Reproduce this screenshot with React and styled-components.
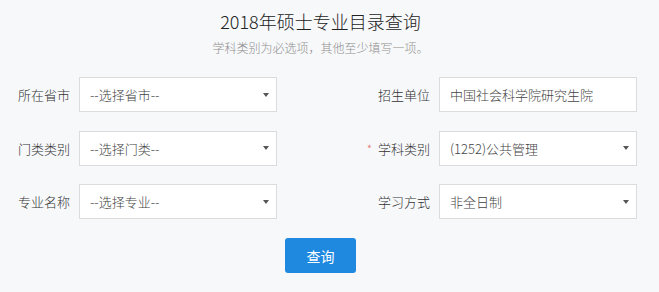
import React from "react";
import styled, { createGlobalStyle } from "styled-components";

const Global = createGlobalStyle`
  html, body { margin: 0; padding: 0; background: #f7f8fa; }
  body { font-family: "Noto Sans CJK SC", "Noto Sans", sans-serif; }
`;

const Page = styled.div`
  width: 659px;
  height: 292px;
  background: #f7f8fa;
  box-sizing: border-box;
  padding-top: 8px;
`;

const Header = styled.div`
  width: 641px;
  text-align: center;
`;

const Title = styled.h1`
  margin: 0;
  font-size: 18px;
  font-weight: 300;
  line-height: 26px;
  color: #222;
`;

const Subtitle = styled.p`
  margin: 5px 0 0;
  font-size: 12px;
  font-weight: 300;
  line-height: 18px;
  color: #8f8f8f;
`;

const Form = styled.div`
  margin-top: 20px;
  display: grid;
  grid-template-columns: 70px 198px 144px 198px;
  column-gap: 9px;
  row-gap: 18.5px;
  align-items: center;
`;

const Label = styled.label`
  text-align: right;
  font-size: 13px;
  font-weight: 300;
  color: #333;
  white-space: nowrap;
`;

const Star = styled.span`
  color: #e57373;
  margin-right: 6px;
  font-size: 12px;
`;

const Field = styled.div`
  position: relative;
  height: 35px;
  box-sizing: border-box;
  background: #fff;
  border: 1px solid #dcdcdc;
  display: flex;
  align-items: center;
  padding: 0 10px;
  font-size: 13px;
  font-weight: 300;
  color: #444;
`;

const Arrow = styled.span`
  position: absolute;
  right: 7px;
  top: 50%;
  margin-top: -2px;
  width: 0;
  height: 0;
  border-left: 3px solid transparent;
  border-right: 3px solid transparent;
  border-top: 4px solid #555;
`;

const Actions = styled.div`
  width: 641px;
  display: flex;
  justify-content: center;
  margin-top: 19px;
`;

const Button = styled.button`
  width: 71px;
  height: 35px;
  border: none;
  border-radius: 3px;
  background: #1f89e0;
  color: #fff;
  font-family: inherit;
  font-size: 14px;
  padding: 0;
  cursor: pointer;
`;

const Select = ({ children }) => (
  <Field>
    {children}
    <Arrow />
  </Field>
);

export default function App() {
  return (
    <Page>
      <Global />
      <Header>
        <Title>2018年硕士专业目录查询</Title>
        <Subtitle>学科类别为必选项，其他至少填写一项。</Subtitle>
      </Header>
      <Form>
        <Label>所在省市</Label>
        <Select>--选择省市--</Select>
        <Label>招生单位</Label>
        <Field>中国社会科学院研究生院</Field>

        <Label>门类类别</Label>
        <Select>--选择门类--</Select>
        <Label>
          <Star>*</Star>学科类别
        </Label>
        <Select>(1252)公共管理</Select>

        <Label>专业名称</Label>
        <Select>--选择专业--</Select>
        <Label>学习方式</Label>
        <Select>非全日制</Select>
      </Form>
      <Actions>
        <Button>查询</Button>
      </Actions>
    </Page>
  );
}
